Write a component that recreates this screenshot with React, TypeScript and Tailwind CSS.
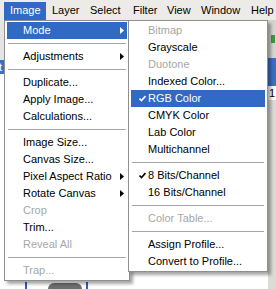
import React from 'react';

type Item =
  | { sep: true }
  | { label: string; disabled?: boolean; arrow?: boolean; active?: boolean; checked?: boolean };

const imageMenu: Item[] = [
  { label: 'Mode', arrow: true, active: true },
  { sep: true },
  { label: 'Adjustments', arrow: true },
  { sep: true },
  { label: 'Duplicate...' },
  { label: 'Apply Image...' },
  { label: 'Calculations...' },
  { sep: true },
  { label: 'Image Size...' },
  { label: 'Canvas Size...' },
  { label: 'Pixel Aspect Ratio', arrow: true },
  { label: 'Rotate Canvas', arrow: true },
  { label: 'Crop', disabled: true },
  { label: 'Trim...' },
  { label: 'Reveal All', disabled: true },
  { sep: true },
  { label: 'Trap...', disabled: true },
];

const modeMenu: Item[] = [
  { label: 'Bitmap', disabled: true },
  { label: 'Grayscale' },
  { label: 'Duotone', disabled: true },
  { label: 'Indexed Color...' },
  { label: 'RGB Color', checked: true, active: true },
  { label: 'CMYK Color' },
  { label: 'Lab Color' },
  { label: 'Multichannel' },
  { sep: true },
  { label: '8 Bits/Channel', checked: true },
  { label: '16 Bits/Channel' },
  { sep: true },
  { label: 'Color Table...', disabled: true },
  { sep: true },
  { label: 'Assign Profile...' },
  { label: 'Convert to Profile...' },
];

const menuBar = [
  { label: 'Image', w: 'w-[42px]' },
  { label: 'Layer', w: 'w-[38px]' },
  { label: 'Select', w: 'w-[43px]' },
  { label: 'Filter', w: 'w-[34px]' },
  { label: 'View', w: 'w-[34px]' },
  { label: 'Window', w: 'w-[50px]' },
  { label: 'Help', w: 'w-[31px]' },
];

const Arrow = ({ white }: { white?: boolean }) => (
  <svg width="4" height="7" viewBox="0 0 4 7" className="shrink-0">
    <path d="M0 0 L4 3.5 L0 7 Z" fill={white ? '#ffffff' : '#000000'} />
  </svg>
);

const Check = ({ white }: { white?: boolean }) => (
  <svg width="7" height="7" viewBox="0 0 7 7" className="shrink-0">
    <path d="M0.5 3.5 L2.5 5.5 L6.5 1" stroke={white ? '#ffffff' : '#000000'} strokeWidth="1.6" fill="none" />
  </svg>
);

const MenuList = ({ items, textPad, checkPad }: { items: Item[]; textPad: string; checkPad?: boolean }) => (
  <div className="flex flex-col">
    {items.map((it, i) =>
      'sep' in it ? (
        <div key={i} className="h-[9px] flex items-center px-[1px]">
          <div className="h-px w-full bg-[#a6a6a6]" />
        </div>
      ) : (
        <div
          key={i}
          className={`h-[17px] flex items-center ${it.active ? 'bg-[#316ac5] text-white' : it.disabled ? 'text-[#a7a7a7]' : 'text-black'}`}
        >
          {checkPad && (
            <div className="w-[16px] flex justify-end pr-[1px]">{it.checked && <Check white={it.active} />}</div>
          )}
          <span className={`flex-1 ${textPad} leading-none`}>{it.label}</span>
          {it.arrow && (
            <div className="pr-[3px]">
              <Arrow white={it.active} />
            </div>
          )}
        </div>
      )
    )}
  </div>
);

export default function App() {
  return (
    <div
      className="relative w-[276px] h-[289px] overflow-hidden bg-white text-[11px] flex flex-col"
      style={{ fontFamily: '"Liberation Sans", Arial, sans-serif' }}
    >
      {/* menu bar */}
      <div className="h-[20px] shrink-0 bg-[#ecebe7] flex items-center pl-[4px] text-black text-[11px]">
        {menuBar.map((b, i) => (
          <div
            key={b.label}
            className={`${b.w} shrink-0 h-[18px] mt-[1px] flex items-center pl-[6px] whitespace-nowrap ${i === 0 ? 'bg-[#316ac5] text-white' : ''}`}
          >
            {b.label}
          </div>
        ))}
      </div>

      {/* workspace behind the menus */}
      <div className="flex-1 flex">
        <div className="w-[5px] flex flex-col">
          <div className="h-[40px] bg-[#e4e4e4]" />
          <div className="h-[14px] bg-[#3a6fc4] text-white leading-[14px] overflow-hidden">
            <span className="-ml-[1px]">t</span>
          </div>
          <div className="flex-1 bg-white" />
        </div>
        <div className="flex-1 flex flex-col justify-end">
          <div className="h-[7px] flex items-end pl-[20px]">
            <div className="w-[2px] h-[7px] bg-[#2f5fb8]" />
            <div className="ml-[21px] w-[34px] h-[6px] bg-[#6e6e6e] rounded-t-[6px]" />
            <div className="ml-[4px] w-[2px] h-[7px] bg-[#2f5fb8]" />
          </div>
        </div>
        <div className="w-[8px] flex flex-col">
          <div className="h-[38px] bg-[#d6d6d0] flex items-center justify-end pr-[1px]">
            <div className="w-[4px] h-[8px] bg-[#3c9a3c]" />
          </div>
          <div className="h-[28px] bg-[#3a6fc4]" />
          <div className="h-[14px] leading-[14px] text-black pl-[1px]">1</div>
          <div className="flex-1 bg-[#dcdcd6]" />
        </div>
      </div>

      {/* Image menu */}
      <div className="absolute left-[4px] top-[20px] w-[126px] bg-white border border-[#8f8f8f] px-[2px] py-[1px] shadow-[3px_3px_3px_rgba(0,0,0,0.35)]">
        <MenuList items={imageMenu} textPad="pl-[16px]" />
      </div>

      {/* Mode submenu */}
      <div className="absolute left-[128px] top-[20px] w-[140px] bg-white border border-[#8f8f8f] px-[2px] py-[1px] shadow-[3px_3px_3px_rgba(0,0,0,0.35)]">
        <MenuList items={modeMenu} textPad="pl-[1px]" checkPad />
      </div>
    </div>
  );
}
